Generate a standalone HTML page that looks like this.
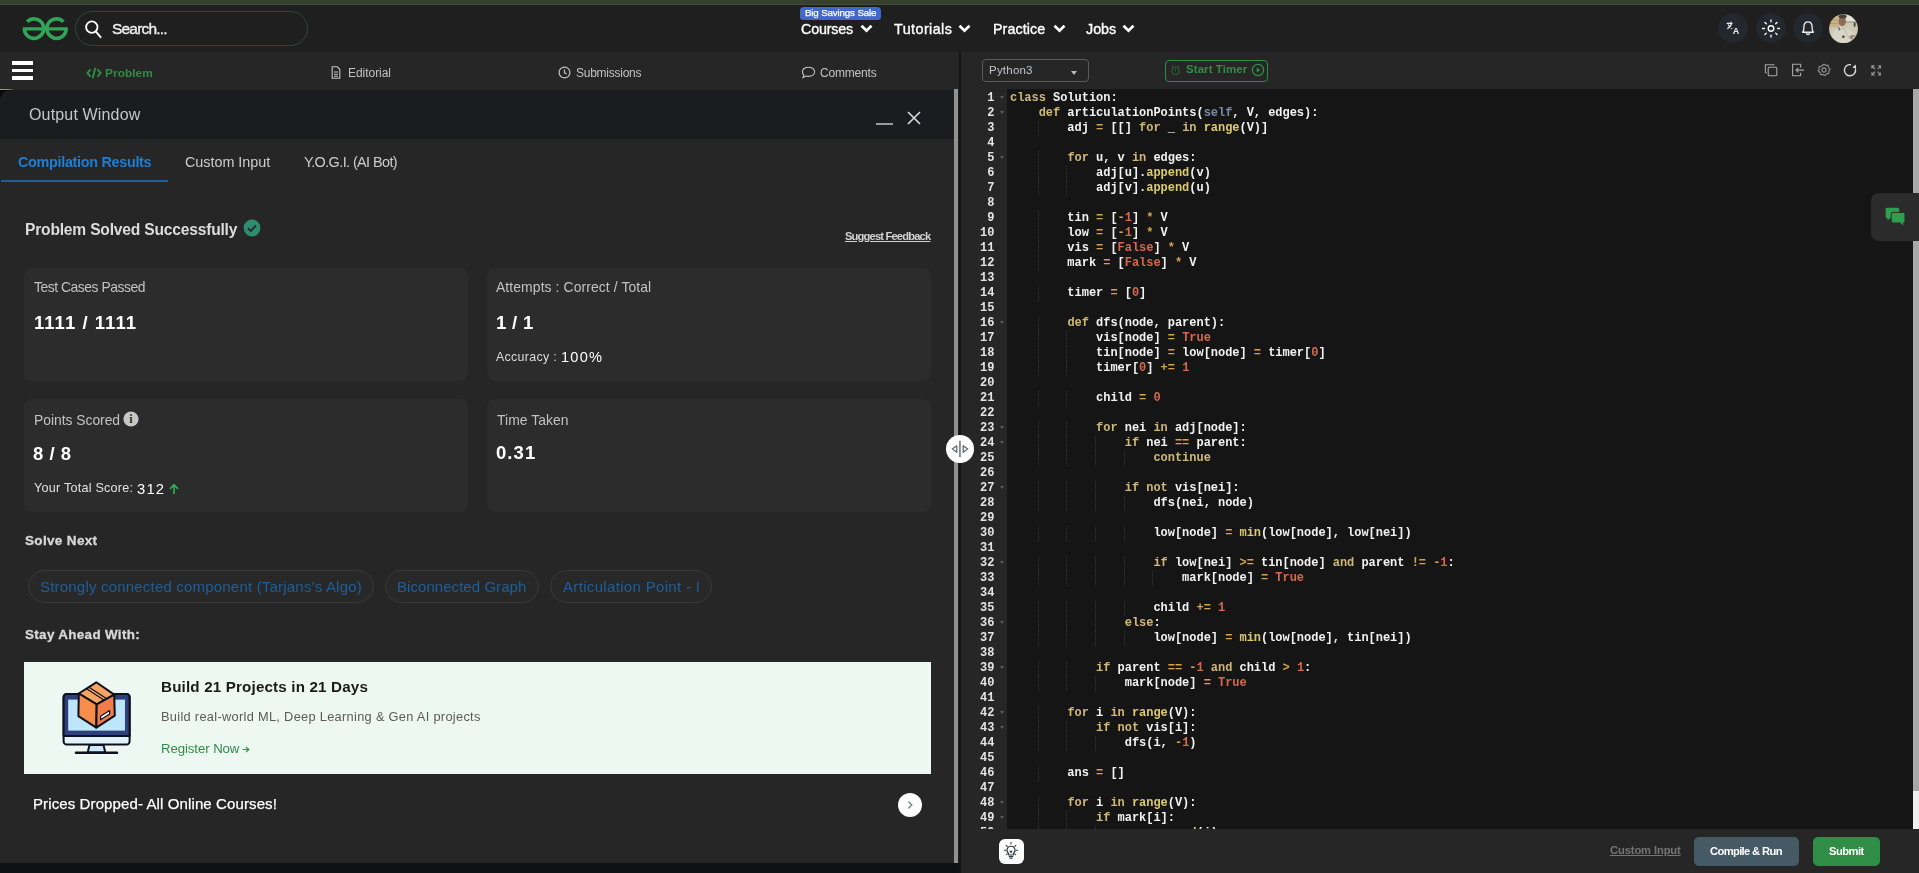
<!DOCTYPE html>
<html lang="en">
<head>
<meta charset="utf-8">
<title>Articulation Point - II | Practice | GeeksforGeeks</title>
<style>
*{box-sizing:border-box;margin:0;padding:0}
html,body{width:1919px;height:873px;overflow:hidden;background:#1f1f1f;font-family:"Liberation Sans",sans-serif;color:#fff}
i{font-style:normal}
.abs{position:absolute}
.t{position:absolute;white-space:nowrap;will-change:transform}
#topbar{left:0;top:0;width:1919px;height:5px;background:#35412d;border-bottom:1px solid #444c41}
#header{left:0;top:5px;width:1919px;height:47px;background:#1f1f1f}
#search{left:75px;top:11px;width:233px;height:35px;border:1px solid #2c4a34;border-radius:18px;background:#1f1f1f}
#badge{left:800px;top:7px;width:80.5px;height:13px;background:#4267c8;border-radius:4px 4px 3px 3px}
.circ{position:absolute;top:13px;width:30px;height:30px;border-radius:50%;background:#22282d}
#subL{left:0;top:52px;width:959px;height:38px;background:#262626}
#subR{left:961px;top:52px;width:958px;height:37px;background:#262626}
#divider{left:959px;top:52px;width:2px;height:821px;background:#141414}
#outhead{left:0;top:90px;width:954px;height:49px;background:#1a1c1f;border-top-left-radius:10px}
#outbody{left:0;top:139px;width:954px;height:724px;background:#262626}
#leftbottom{left:0;top:863px;width:959px;height:10px;background:#0f1113}
#lscroll{left:954px;top:89px;width:4px;height:774px;background:#909090}
.card{position:absolute;background:#2c2c2c;border-radius:8px}
.pill{position:absolute;top:570px;height:33px;border:1px solid #3a3a3a;border-radius:17px;background:#282828}
#editor{left:961px;top:89px;width:958px;height:740px;background:#151515;overflow:hidden}
#gutter{position:absolute;left:0;top:0;width:46px;will-change:transform;height:740px;background:#262626}
.gl{position:relative;height:15px;line-height:15px;font:bold 12px/15px "Liberation Mono",monospace;color:#e4e4e4;text-align:right;padding-right:12.5px}
.fd{position:absolute;right:3.5px;top:4.5px;width:0;height:0;border-left:2.5px solid transparent;border-right:2.5px solid transparent;border-top:3.5px solid #5c5c5c}
#code{position:absolute;left:49px;top:2px;will-change:transform;font:bold 12px/15px "Liberation Mono",monospace;color:#f2f2f2;letter-spacing:-0.03px}
.cl{height:15px;white-space:pre}
.k{color:#cfb878}.f{color:#dccb6e}.n{color:#d4694e}.s{color:#7c8aa6}.o{color:#d6a24e}
.g{display:inline-block;height:15px;vertical-align:top;background:linear-gradient(#363636 50%,transparent 50%) right top/1px 2px repeat-y}
#ebottom{left:961px;top:829px;width:958px;height:44px;background:#262626}
#rscroll{left:1913px;top:89px;width:6px;height:740px;background:#f0f0f0}
#rscroll div{width:6px;height:702px;background:#a8a8a8}
</style>
</head>
<body>
<div id="topbar" class="abs"></div>
<div id="header" class="abs"></div>
<!-- logo -->
<svg class="abs" style="left:22px;top:16px" width="48" height="26" viewBox="0 0 48 26">
<g fill="none" stroke="#30a457" stroke-width="3.6">
<path d="M5.2 5.8 A9.7 9.7 0 1 1 2.4 12.9"/>
<path d="M41.4 5.8 A9.7 9.7 0 1 0 44.2 12.9"/>
<path d="M0.8 12.9 H45.8" stroke-width="3.4"/>
</g>
</svg>
<div id="search" class="abs">
<svg class="abs" style="left:7px;top:6px" width="24" height="24" viewBox="0 0 24 24"><circle cx="8.8" cy="9.1" r="5.7" fill="none" stroke="#fff" stroke-width="1.8"/><path d="M12.7 13.3 L17.6 19.2" stroke="#fff" stroke-width="1.9" stroke-linecap="round"/></svg>
</div>
<div id="badge" class="abs"></div>
<svg class="abs" style="left:860px;top:24px" width="13" height="9" viewBox="0 0 13 9"><path d="M1.5 1.7 L6.5 6.7 L11.5 1.7" fill="none" stroke="#fff" stroke-width="2.7"/></svg>
<svg class="abs" style="left:958.3px;top:24px" width="13" height="9" viewBox="0 0 13 9"><path d="M1.5 1.7 L6.5 6.7 L11.5 1.7" fill="none" stroke="#fff" stroke-width="2.7"/></svg>
<svg class="abs" style="left:1052.5px;top:24px" width="13" height="9" viewBox="0 0 13 9"><path d="M1.5 1.7 L6.5 6.7 L11.5 1.7" fill="none" stroke="#fff" stroke-width="2.7"/></svg>
<svg class="abs" style="left:1122.3px;top:24px" width="13" height="9" viewBox="0 0 13 9"><path d="M1.5 1.7 L6.5 6.7 L11.5 1.7" fill="none" stroke="#fff" stroke-width="2.7"/></svg>
<!-- right icons -->
<div class="circ" style="left:1718px"><svg style="will-change:transform" width="30" height="30" viewBox="0 0 30 30"><g fill="none" stroke="#ededed" stroke-width="1.2"><path d="M8.7 10.3 H14.5 M12.9 8.7 V10.3 M9.2 15.8 C11.6 14.6 13 12.7 13.5 10.3 M10.1 11.5 C10.8 13.2 12.3 14.8 14.3 15.7"/></g><text x="14.7" y="20.9" font-family="Liberation Sans,sans-serif" font-weight="bold" font-size="9" fill="#ededed">A</text></svg></div>
<div class="circ" style="left:1756px"><svg width="30" height="30" viewBox="0 0 30 30"><g fill="none" stroke="#fff" stroke-width="1.45" stroke-linecap="round"><circle cx="15" cy="15.45" r="2.75"/><path d="M21.60 15.45 L23.50 15.45 M19.67 20.12 L21.01 21.46 M15.00 22.05 L15.00 23.95 M10.33 20.12 L8.99 21.46 M8.40 15.45 L6.50 15.45 M10.33 10.78 L8.99 9.44 M15.00 8.85 L15.00 6.95 M19.67 10.78 L21.01 9.44" stroke-width="1.35"/></g></svg></div>
<div class="circ" style="left:1793px"><svg width="30" height="30" viewBox="0 0 30 30"><g fill="none" stroke="#ededed" stroke-width="1.35" stroke-linejoin="round"><path d="M9.6 19.2 H20.4 C19.3 18.1 19.1 17.2 19.1 14.2 C19.1 10.9 17.4 8.9 15 8.9 C12.6 8.9 10.9 10.9 10.9 14.2 C10.9 17.2 10.7 18.1 9.6 19.2 Z"/><path d="M13.4 19.8 C13.6 21 14.2 21.6 15 21.6 C15.8 21.6 16.4 21 16.6 19.8"/></g></svg></div>
<!-- avatar -->
<svg class="abs" style="left:1828.5px;top:13.7px" width="29" height="30" viewBox="0 0 29 30"><defs><clipPath id="av"><circle cx="14.5" cy="14.7" r="14.4"/></clipPath><filter id="bl" x="-10%" y="-10%" width="120%" height="120%"><feGaussianBlur stdDeviation="0.55"/></filter></defs><g clip-path="url(#av)"><g filter="url(#bl)"><rect x="-2" y="-2" width="33" height="34" fill="#cdc9b7"/><path d="M-1 2 L10 1 L10 13 L-1 14 Z" fill="#c9b489"/><path d="M1 6 H9 M1 9.5 H9" stroke="#a89870" stroke-width="0.8"/><rect x="17" y="-1" width="13" height="9" fill="#e2e0d3"/><path d="M16 8 H28" stroke="#7c7a66" stroke-width="0.8"/><path d="M1 30 C2 18 7 14 12 13.5 C19 13 26 17 29 30 Z" fill="#d8d5c6"/><ellipse cx="13.2" cy="7.2" rx="3.7" ry="5" fill="#8d6d58"/><ellipse cx="13.6" cy="2.6" rx="4" ry="2" fill="#4d3f35"/><path d="M9 12.5 L11.5 15.5 L10 16.5 Z" fill="#4f4236"/><path d="M9 17 L15 14 L20 24" fill="none" stroke="#b9b5a2" stroke-width="0.9"/><ellipse cx="25.6" cy="10.5" rx="1" ry="2.6" fill="#3f4536"/><circle cx="14.4" cy="22.8" r="1.2" fill="#3b3a2c"/><ellipse cx="23.6" cy="23.2" rx="3" ry="2.2" fill="#9d8676"/><circle cx="25" cy="24" r="1" fill="#f0eee8"/></g></g></svg>

<div id="subL" class="abs"></div>
<div id="subR" class="abs"></div>
<div id="divider" class="abs"></div>
<!-- hamburger -->
<div class="abs" style="left:12px;top:61px;width:21px;height:3.5px;background:#fff"></div>
<div class="abs" style="left:12px;top:68.5px;width:21px;height:3.5px;background:#fff"></div>
<div class="abs" style="left:12px;top:76px;width:21px;height:3.5px;background:#fff"></div>
<div class="abs" style="left:0;top:88.5px;width:16px;height:1.6px;background:linear-gradient(90deg,#79b892,#5fa37c 50%,#1f4a32 80%,#163322);border-radius:0 2px 2px 0"></div>
<!-- tabs -->
<svg class="abs" style="left:86px;top:66.8px" width="16" height="12" viewBox="0 0 16 12"><g fill="none" stroke="#2f8d46" stroke-width="1.9"><path d="M4.6 2.4 L1.4 6 L4.6 9.6 M11.4 2.4 L14.6 6 L11.4 9.6 M9.3 0.8 L6.7 11.2"/></g></svg>
<svg class="abs" style="left:331px;top:66px" width="10" height="13" viewBox="0 0 10 13"><path d="M1.2 0.8 H6.3 L8.8 3.3 V12.2 H1.2 Z M3 6 H7 M3 8.2 H7 M3 10.2 H7" fill="none" stroke="#c4c4c4" stroke-width="1.1"/></svg>
<svg class="abs" style="left:558px;top:66px" width="13" height="13" viewBox="0 0 13 13"><circle cx="6.5" cy="6.5" r="5.4" fill="none" stroke="#c4c4c4" stroke-width="1.2"/><path d="M6.5 3.4 V6.8 L8.6 8" fill="none" stroke="#c4c4c4" stroke-width="1.2"/></svg>
<svg class="abs" style="left:801px;top:66px" width="15" height="13" viewBox="0 0 15 13"><path d="M7.5 1.2 C11 1.2 13.6 3.2 13.6 5.8 C13.6 8.4 11 10.4 7.5 10.4 C6.6 10.4 5.8 10.3 5 10 L2 11.6 L2.8 8.9 C1.9 8.1 1.4 7 1.4 5.8 C1.4 3.2 4 1.2 7.5 1.2 Z" fill="none" stroke="#c4c4c4" stroke-width="1.1"/></svg>
<!-- editor toolbar -->
<div class="abs" style="left:982px;top:59px;width:107px;height:23px;border:1px solid #5a5a5a;border-radius:4px;background:#262626"></div>
<div class="abs" style="left:1071px;top:71px;width:0;height:0;border-left:3.5px solid transparent;border-right:3.5px solid transparent;border-top:4px solid #bbb"></div>
<div class="abs" style="left:1165px;top:60px;width:103px;height:22px;border:1px solid #2f8d46;border-radius:4px"></div>
<svg class="abs" style="left:1169.5px;top:64px" width="11" height="12" viewBox="0 0 11 12"><g fill="none" stroke="#256e38" stroke-width="1"><circle cx="5.5" cy="6.8" r="3.8"/><path d="M5.5 4.8 V7 M1.8 2.6 L3.4 1.4 M9.2 2.6 L7.6 1.4"/></g></svg>
<svg class="abs" style="left:1251px;top:63px" width="14" height="14" viewBox="0 0 14 14"><circle cx="7" cy="7" r="5.6" fill="none" stroke="#2f8d46" stroke-width="1.2"/><path d="M5.6 4.4 L9.4 7 L5.6 9.6 Z" fill="#2f8d46"/></svg>
<!-- toolbar icons -->
<svg class="abs" style="left:1764px;top:63px" width="14" height="14" viewBox="0 0 14 14"><g fill="none" stroke="#a6a6a6" stroke-width="1.1"><rect x="4.2" y="4.2" width="8.6" height="8.6" rx="1"/><path d="M9.8 2.6 V1.8 H1.4 V9.8 H2.6"/></g></svg>
<svg class="abs" style="left:1791px;top:63px" width="14" height="14" viewBox="0 0 14 14"><g fill="none" stroke="#a6a6a6" stroke-width="1.1"><path d="M9.6 4.4 V1.2 H1.6 V12.8 H9.6 V9.8"/><path d="M13 7.1 H5 M7.4 4.8 L5 7.1 L7.4 9.4"/></g></svg>
<svg class="abs" style="left:1817px;top:63px" width="14" height="14" viewBox="0 0 14 14"><g fill="none" stroke="#929292" stroke-width="1.1"><path d="M7 1.2 L8.9 2.4 L11.1 2.3 L11.6 4.5 L13 6.2 L11.9 8.1 L11.8 10.4 L9.6 10.9 L7.9 12.6 L6 11.6 L3.7 11.6 L3 9.5 L1.2 8 L2.2 6 L2 3.8 L4.2 3.2 Z" stroke-linejoin="round"/><circle cx="7" cy="7" r="2.1"/></g></svg>
<svg class="abs" style="left:1842px;top:62px" width="16" height="16" viewBox="0 0 16 16"><path d="M9 2.7 A5.6 5.6 0 1 0 13.5 7.2" fill="none" stroke="#dcdcdc" stroke-width="1.4"/><path d="M13.9 2.6 L14.1 6.9 L10.4 5.3 Z" fill="#dcdcdc"/></svg>
<svg class="abs" style="left:1870.6px;top:65px" width="10.8" height="10.8" viewBox="0 0 12 12"><g fill="none" stroke="#959595" stroke-width="1.3"><path d="M1 4 V1 H4 M8 1 H11 V4 M11 8 V11 H8 M4 11 H1 V8 M1.2 1.2 L4.6 4.6 M10.8 1.2 L7.4 4.6 M10.8 10.8 L7.4 7.4 M1.2 10.8 L4.6 7.4"/></g></svg>
<!-- output window -->
<div class="abs" style="left:0;top:90px;width:12px;height:14px;background:#060906"></div>
<div id="outhead" class="abs"></div>
<div id="outbody" class="abs"></div>
<div id="leftbottom" class="abs"></div>
<div id="lscroll" class="abs"></div>
<div class="abs" style="left:876px;top:123px;width:17px;height:2px;background:#9a9a9a"></div>
<svg class="abs" style="left:906px;top:110px" width="16" height="16" viewBox="0 0 16 16"><path d="M2 2 L14 14 M14 2 L2 14" stroke="#d6d6d6" stroke-width="1.7"/></svg>
<div class="abs" style="left:1px;top:180px;width:167px;height:2px;background:#1b5f9e"></div>
<svg class="abs" style="left:243px;top:219px" width="18" height="18" viewBox="0 0 18 18"><circle cx="9" cy="9" r="8.4" fill="#2f8d6f"/><path d="M5 9.3 L7.9 12 L13 6.4" fill="none" stroke="#262626" stroke-width="1.9"/></svg>
<div class="card" style="left:24px;top:268px;width:444px;height:113px"></div>
<div class="card" style="left:487px;top:268px;width:444px;height:113px"></div>
<div class="card" style="left:24px;top:399px;width:444px;height:113px"></div>
<div class="card" style="left:487px;top:399px;width:444px;height:113px"></div>
<svg class="abs" style="left:123.4px;top:411.4px" width="16" height="16" viewBox="0 0 16 16"><circle cx="8" cy="8" r="7.6" fill="#c6c6c6"/><text x="8" y="12.2" text-anchor="middle" font-family="Liberation Serif,serif" font-weight="bold" font-size="12" fill="#2c2c2c">i</text></svg>
<svg class="abs" style="left:168px;top:483px" width="12" height="12" viewBox="0 0 12 12"><path d="M6 11 V2 M2 5.8 L6 1.8 L10 5.8" fill="none" stroke="#2fae4f" stroke-width="1.7"/></svg>
<div class="pill" style="left:28px;width:346px"></div>
<div class="pill" style="left:385px;width:154px"></div>
<div class="pill" style="left:550px;width:162px"></div>
<div class="abs" style="left:24px;top:662px;width:907px;height:112px;background:#eef8f3"></div>
<div class="abs" style="left:898px;top:792.5px;width:24px;height:24px;border-radius:50%;background:#fff"></div>
<svg class="abs" style="left:905px;top:798.6px" width="10" height="12" viewBox="0 0 10 12"><path d="M3.4 2.6 L6.8 6 L3.4 9.4" fill="none" stroke="#6b8f8a" stroke-width="1.4"/></svg>

<svg class="abs" style="left:241.5px;top:746px" width="8" height="7" viewBox="0 0 8 7"><path d="M0.6 3.5 H6.6 M4 0.9 L6.8 3.5 L4 6.1" fill="none" stroke="#2f8d46" stroke-width="1.2"/></svg>
<!-- banner icon -->
<svg class="abs" style="left:50px;top:670px" width="100" height="95" viewBox="0 0 100 95">
<g stroke="#0d101d" stroke-width="2" stroke-linejoin="round">
<path d="M39.5 75 H53.5 L55.3 82.4 H37.7 Z" fill="#cbe9f8"/>
<rect x="13.6" y="24" width="66" height="50.6" rx="3.2" fill="#e1f2fb"/>
<path d="M13.6 66 V27.2 A3.2 3.2 0 0 1 16.8 24 H76.4 A3.2 3.2 0 0 1 79.6 27.2 V66 Z" fill="#2e3f7c"/>
<rect x="18.2" y="29.6" width="56.8" height="31" fill="#bde6fb" stroke="none"/>
<path d="M26 82.8 H67" stroke-width="2.5" stroke-linecap="round"/>
<path d="M46.3 12.3 L64.2 24.6 L46.7 34.4 L28.8 23.5 Z" fill="#f7a461"/>
<path d="M28.8 23.5 L46.7 34.4 L46.3 57.6 L28.4 46.2 Z" fill="#f68e49"/>
<path d="M46.7 34.4 L64.2 24.6 L64.8 45.6 L46.3 57.6 Z" fill="#ef7c4a"/>
<path d="M39 17.2 L56.8 28.8 M36.6 18.8 L54.3 30.3" fill="none" stroke-width="1.2"/>
<path d="M50.6 46.2 L59.6 40.6 V44 L50.6 49.8 Z" fill="#fff" stroke-width="1.2"/>
</g>
</svg>
<!-- editor -->
<div id="editor" class="abs">
<div id="gutter">
<div style="height:2px"></div>
<div class="gl">1<b class="fd"></b></div>
<div class="gl">2<b class="fd"></b></div>
<div class="gl">3</div>
<div class="gl">4</div>
<div class="gl">5<b class="fd"></b></div>
<div class="gl">6</div>
<div class="gl">7</div>
<div class="gl">8</div>
<div class="gl">9</div>
<div class="gl">10</div>
<div class="gl">11</div>
<div class="gl">12</div>
<div class="gl">13</div>
<div class="gl">14</div>
<div class="gl">15</div>
<div class="gl">16<b class="fd"></b></div>
<div class="gl">17</div>
<div class="gl">18</div>
<div class="gl">19</div>
<div class="gl">20</div>
<div class="gl">21</div>
<div class="gl">22</div>
<div class="gl">23<b class="fd"></b></div>
<div class="gl">24<b class="fd"></b></div>
<div class="gl">25</div>
<div class="gl">26</div>
<div class="gl">27<b class="fd"></b></div>
<div class="gl">28</div>
<div class="gl">29</div>
<div class="gl">30</div>
<div class="gl">31</div>
<div class="gl">32<b class="fd"></b></div>
<div class="gl">33</div>
<div class="gl">34</div>
<div class="gl">35</div>
<div class="gl">36<b class="fd"></b></div>
<div class="gl">37</div>
<div class="gl">38</div>
<div class="gl">39<b class="fd"></b></div>
<div class="gl">40</div>
<div class="gl">41</div>
<div class="gl">42<b class="fd"></b></div>
<div class="gl">43<b class="fd"></b></div>
<div class="gl">44</div>
<div class="gl">45</div>
<div class="gl">46</div>
<div class="gl">47</div>
<div class="gl">48<b class="fd"></b></div>
<div class="gl">49<b class="fd"></b></div>
<div class="gl">50</div>
</div>
<div id="code">
<div class="cl"><i class="k">class</i> Solution:</div>
<div class="cl">    <i class="k">def</i> articulationPoints(<i class="s">self</i>, V, edges):</div>
<div class="cl"><i class="g">    </i>    adj <i class="o">=</i> [[] <i class="k">for</i> _ <i class="k">in</i> <i class="f">range</i>(V)]</div>
<div class="cl"></div>
<div class="cl"><i class="g">    </i>    <i class="k">for</i> u, v <i class="k">in</i> edges:</div>
<div class="cl"><i class="g">    </i><i class="g">    </i>    adj[u].<i class="f">append</i>(v)</div>
<div class="cl"><i class="g">    </i><i class="g">    </i>    adj[v].<i class="f">append</i>(u)</div>
<div class="cl"></div>
<div class="cl"><i class="g">    </i>    tin <i class="o">=</i> [<i class="o">-</i><i class="n">1</i>] <i class="o">*</i> V</div>
<div class="cl"><i class="g">    </i>    low <i class="o">=</i> [<i class="o">-</i><i class="n">1</i>] <i class="o">*</i> V</div>
<div class="cl"><i class="g">    </i>    vis <i class="o">=</i> [<i class="n">False</i>] <i class="o">*</i> V</div>
<div class="cl"><i class="g">    </i>    mark <i class="o">=</i> [<i class="n">False</i>] <i class="o">*</i> V</div>
<div class="cl"></div>
<div class="cl"><i class="g">    </i>    timer <i class="o">=</i> [<i class="n">0</i>]</div>
<div class="cl"></div>
<div class="cl"><i class="g">    </i>    <i class="k">def</i> dfs(node, parent):</div>
<div class="cl"><i class="g">    </i><i class="g">    </i>    vis[node] <i class="o">=</i> <i class="n">True</i></div>
<div class="cl"><i class="g">    </i><i class="g">    </i>    tin[node] <i class="o">=</i> low[node] <i class="o">=</i> timer[<i class="n">0</i>]</div>
<div class="cl"><i class="g">    </i><i class="g">    </i>    timer[<i class="n">0</i>] <i class="o">+=</i> <i class="n">1</i></div>
<div class="cl"></div>
<div class="cl"><i class="g">    </i><i class="g">    </i>    child <i class="o">=</i> <i class="n">0</i></div>
<div class="cl"></div>
<div class="cl"><i class="g">    </i><i class="g">    </i>    <i class="k">for</i> nei <i class="k">in</i> adj[node]:</div>
<div class="cl"><i class="g">    </i><i class="g">    </i><i class="g">    </i>    <i class="k">if</i> nei <i class="o">==</i> parent:</div>
<div class="cl"><i class="g">    </i><i class="g">    </i><i class="g">    </i><i class="g">    </i>    <i class="k">continue</i></div>
<div class="cl"></div>
<div class="cl"><i class="g">    </i><i class="g">    </i><i class="g">    </i>    <i class="k">if</i> <i class="k">not</i> vis[nei]:</div>
<div class="cl"><i class="g">    </i><i class="g">    </i><i class="g">    </i><i class="g">    </i>    dfs(nei, node)</div>
<div class="cl"></div>
<div class="cl"><i class="g">    </i><i class="g">    </i><i class="g">    </i><i class="g">    </i>    low[node] <i class="o">=</i> <i class="f">min</i>(low[node], low[nei])</div>
<div class="cl"></div>
<div class="cl"><i class="g">    </i><i class="g">    </i><i class="g">    </i><i class="g">    </i>    <i class="k">if</i> low[nei] <i class="o">&gt;=</i> tin[node] <i class="k">and</i> parent <i class="o">!=</i> <i class="o">-</i><i class="n">1</i>:</div>
<div class="cl"><i class="g">    </i><i class="g">    </i><i class="g">    </i><i class="g">    </i><i class="g">    </i>    mark[node] <i class="o">=</i> <i class="n">True</i></div>
<div class="cl"></div>
<div class="cl"><i class="g">    </i><i class="g">    </i><i class="g">    </i><i class="g">    </i>    child <i class="o">+=</i> <i class="n">1</i></div>
<div class="cl"><i class="g">    </i><i class="g">    </i><i class="g">    </i>    <i class="k">else</i>:</div>
<div class="cl"><i class="g">    </i><i class="g">    </i><i class="g">    </i><i class="g">    </i>    low[node] <i class="o">=</i> <i class="f">min</i>(low[node], tin[nei])</div>
<div class="cl"></div>
<div class="cl"><i class="g">    </i><i class="g">    </i>    <i class="k">if</i> parent <i class="o">==</i> <i class="o">-</i><i class="n">1</i> <i class="k">and</i> child <i class="o">&gt;</i> <i class="n">1</i>:</div>
<div class="cl"><i class="g">    </i><i class="g">    </i><i class="g">    </i>    mark[node] <i class="o">=</i> <i class="n">True</i></div>
<div class="cl"></div>
<div class="cl"><i class="g">    </i>    <i class="k">for</i> i <i class="k">in</i> <i class="f">range</i>(V):</div>
<div class="cl"><i class="g">    </i><i class="g">    </i>    <i class="k">if</i> <i class="k">not</i> vis[i]:</div>
<div class="cl"><i class="g">    </i><i class="g">    </i><i class="g">    </i>    dfs(i, <i class="o">-</i><i class="n">1</i>)</div>
<div class="cl"></div>
<div class="cl"><i class="g">    </i>    ans <i class="o">=</i> []</div>
<div class="cl"></div>
<div class="cl"><i class="g">    </i>    <i class="k">for</i> i <i class="k">in</i> <i class="f">range</i>(V):</div>
<div class="cl"><i class="g">    </i><i class="g">    </i>    <i class="k">if</i> mark[i]:</div>
<div class="cl"><i class="g">    </i><i class="g">    </i><i class="g">    </i>    ans.<i class="f">append</i>(i)</div>
</div>
</div>
<div id="rscroll" class="abs"><div></div></div>
<div id="ebottom" class="abs"></div>
<div class="abs" style="left:998.6px;top:839.4px;width:25px;height:24.4px;border-radius:6px;background:#fff"></div>
<svg class="abs" style="left:1001px;top:841px" width="20" height="20" viewBox="0 0 20 20"><g fill="none" stroke="#2b3a42" stroke-width="1.1" stroke-linecap="round"><path d="M10 5.2 A4 4 0 0 1 12.3 12.5 V14 H7.7 V12.5 A4 4 0 0 1 10 5.2 Z"/><path d="M8.2 15.6 H11.8 M9 17.2 H11 M10 1.6 V3 M3.4 9.2 H4.8 M15.2 9.2 H16.6 M5.2 4.4 L6.2 5.4 M14.8 4.4 L13.8 5.4 M5.4 13.6 L6.3 12.8 M14.6 13.6 L13.7 12.8"/><path d="M9 10 L10 11.5 L11 10"/></g></svg>
<div class="abs" style="left:1694px;top:837px;width:105px;height:29px;border-radius:5px;background:#455a64"></div>
<div class="abs" style="left:1813px;top:837px;width:67px;height:29px;border-radius:5px;background:#2f8d46"></div>
<!-- chat float -->
<div class="abs" style="left:1871px;top:193px;width:48px;height:48px;background:#2b2b2b;border-radius:8px 0 0 8px"></div>
<svg class="abs" style="left:1885px;top:207px" width="22" height="20" viewBox="0 0 22 20"><g fill="#2f9e4f"><rect x="0.6" y="0.8" width="13.6" height="10.4" rx="1.8"/><path d="M2.4 10.6 V13.6 L5.6 10.8 Z"/><rect x="6.2" y="5.4" width="13.8" height="10.6" rx="1.8" stroke="#2b2b2b" stroke-width="1"/><path d="M15 15.6 L18.2 18.4 V15.4 Z"/></g></svg>
<!-- splitter handle -->
<div class="abs" style="left:946px;top:435px;width:28px;height:28px;border-radius:50%;background:#fff"></div>
<svg class="abs" style="left:950px;top:440px" width="20" height="18" viewBox="0 0 20 18"><g fill="none" stroke="#5d6b76" stroke-width="1.3" stroke-linejoin="round"><path d="M9.95 0.8 V17.2" stroke="#2f3b45" stroke-width="1.1"/><path d="M6.8 5.8 V12.2 L2.3 9 Z"/><path d="M13.2 5.8 V12.2 L17.7 9 Z"/></g></svg>

<div class="t" style="left:111.7px;top:20.8px;font-size:15.5px;line-height:15.5px;color:#f0f0f0;letter-spacing:-0.804px;-webkit-text-stroke:0.35px #f0f0f0;">Search...</div>
<div class="t" style="left:805.1px;top:7.9px;font-size:9.8px;line-height:9.8px;color:#fff;letter-spacing:-0.172px;-webkit-text-stroke:0.25px #fff;">Big Savings Sale</div>
<div class="t" style="left:801.1px;top:21.5px;font-size:14.3px;line-height:14.3px;color:#fff;letter-spacing:-0.175px;-webkit-text-stroke:0.35px #fff;">Courses</div>
<div class="t" style="left:894.4px;top:21.5px;font-size:14.3px;line-height:14.3px;color:#fff;letter-spacing:0.450px;-webkit-text-stroke:0.35px #fff;">Tutorials</div>
<div class="t" style="left:993.4px;top:21.5px;font-size:14.3px;line-height:14.3px;color:#fff;letter-spacing:0.078px;-webkit-text-stroke:0.35px #fff;">Practice</div>
<div class="t" style="left:1086.1px;top:21.5px;font-size:14.3px;line-height:14.3px;color:#fff;letter-spacing:-0.001px;-webkit-text-stroke:0.35px #fff;">Jobs</div>
<div class="t" style="left:105.4px;top:67.6px;font-size:11.8px;line-height:11.8px;color:#2f8d46;letter-spacing:0.083px;font-weight:bold;">Problem</div>
<div class="t" style="left:347.8px;top:66.5px;font-size:12px;line-height:12px;color:#c2c2c2;letter-spacing:-0.045px;">Editorial</div>
<div class="t" style="left:576.4px;top:66.5px;font-size:12px;line-height:12px;color:#c2c2c2;letter-spacing:-0.253px;">Submissions</div>
<div class="t" style="left:820.3px;top:66.5px;font-size:12px;line-height:12px;color:#c2c2c2;letter-spacing:-0.188px;">Comments</div>
<div class="t" style="left:989.4px;top:65.1px;font-size:11.5px;line-height:11.5px;color:#c0c5ca;letter-spacing:0.216px;">Python3</div>
<div class="t" style="left:1186.1px;top:64.1px;font-size:11.5px;line-height:11.5px;color:#2f8d46;letter-spacing:0.068px;font-weight:bold;">Start Timer</div>
<div class="t" style="left:28.9px;top:107.3px;font-size:16px;line-height:16px;color:#c6c6c6;letter-spacing:0.159px;">Output Window</div>
<div class="t" style="left:18.0px;top:154.5px;font-size:14.4px;line-height:14.4px;color:#1e7ed6;letter-spacing:-0.307px;font-weight:bold;">Compilation Results</div>
<div class="t" style="left:185.0px;top:154.5px;font-size:14.4px;line-height:14.4px;color:#cdcdcd;letter-spacing:-0.036px;">Custom Input</div>
<div class="t" style="left:303.6px;top:154.5px;font-size:14.4px;line-height:14.4px;color:#cdcdcd;letter-spacing:-0.582px;">Y.O.G.I. (AI Bot)</div>
<div class="t" style="left:24.6px;top:221.9px;font-size:15.6px;line-height:15.6px;color:#dcdcdc;letter-spacing:-0.197px;font-weight:bold;">Problem Solved Successfully</div>
<div class="t" style="left:845.2px;top:231.1px;font-size:11.2px;line-height:11.2px;color:#d2d2d2;letter-spacing:-0.844px;font-weight:bold;text-decoration:underline;text-underline-offset:1px;">Suggest Feedback</div>
<div class="t" style="left:34.3px;top:281.4px;font-size:13.9px;line-height:13.9px;color:#c2c2c2;letter-spacing:-0.469px;">Test Cases Passed</div>
<div class="t" style="left:34.3px;top:313.5px;font-size:18.5px;line-height:18.5px;color:#fff;letter-spacing:1.039px;font-weight:bold;">1111 / 1111</div>
<div class="t" style="left:496.1px;top:281.4px;font-size:13.9px;line-height:13.9px;color:#c2c2c2;letter-spacing:0.104px;">Attempts : Correct / Total</div>
<div class="t" style="left:496.1px;top:313.5px;font-size:18.5px;line-height:18.5px;color:#fff;letter-spacing:0.300px;font-weight:bold;">1 / 1</div>
<div class="t" style="left:496.1px;top:350.8px;font-size:12.4px;line-height:12.4px;color:#dadada;letter-spacing:0.306px;">Accuracy :</div>
<div class="t" style="left:561.0px;top:349.6px;font-size:14.6px;line-height:14.6px;color:#fff;letter-spacing:1.257px;">100%</div>
<div class="t" style="left:33.8px;top:414.3px;font-size:13.9px;line-height:13.9px;color:#c2c2c2;letter-spacing:-0.032px;">Points Scored</div>
<div class="t" style="left:33.4px;top:445.1px;font-size:18.5px;line-height:18.5px;color:#fff;letter-spacing:0.500px;font-weight:bold;">8 / 8</div>
<div class="t" style="left:33.8px;top:482.4px;font-size:12.6px;line-height:12.6px;color:#e2e2e2;letter-spacing:0.236px;">Your Total Score:</div>
<div class="t" style="left:136.6px;top:481.6px;font-size:14.8px;line-height:14.8px;color:#fff;letter-spacing:1.148px;">312</div>
<div class="t" style="left:496.6px;top:414.1px;font-size:13.9px;line-height:13.9px;color:#c2c2c2;letter-spacing:0.041px;">Time Taken</div>
<div class="t" style="left:496.1px;top:444.3px;font-size:18.5px;line-height:18.5px;color:#fff;letter-spacing:1.061px;font-weight:bold;">0.31</div>
<div class="t" style="left:24.5px;top:534.0px;font-size:13.5px;line-height:13.5px;color:#d8d8d8;letter-spacing:0.341px;font-weight:bold;-webkit-text-stroke:0.3px #d8d8d8;">Solve Next</div>
<div class="t" style="left:40.0px;top:578.9px;font-size:15px;line-height:15px;color:#1c5f9d;letter-spacing:0.197px;">Strongly connected component (Tarjans&#x27;s Algo)</div>
<div class="t" style="left:397.3px;top:578.9px;font-size:15px;line-height:15px;color:#1c5f9d;letter-spacing:0.055px;">Biconnected Graph</div>
<div class="t" style="left:562.6px;top:578.9px;font-size:15px;line-height:15px;color:#1c5f9d;letter-spacing:0.330px;">Articulation Point - I</div>
<div class="t" style="left:24.5px;top:627.9px;font-size:13.4px;line-height:13.4px;color:#d8d8d8;letter-spacing:0.347px;font-weight:bold;-webkit-text-stroke:0.3px #d8d8d8;">Stay Ahead With:</div>
<div class="t" style="left:160.7px;top:678.5px;font-size:15.2px;line-height:15.2px;color:#1a1a1a;letter-spacing:0.159px;font-weight:bold;">Build 21 Projects in 21 Days</div>
<div class="t" style="left:160.7px;top:710.8px;font-size:12.8px;line-height:12.8px;color:#5a5a5a;letter-spacing:0.307px;">Build real-world ML, Deep Learning &amp; Gen AI projects</div>
<div class="t" style="left:160.7px;top:742.3px;font-size:13.2px;line-height:13.2px;color:#2f8d46;letter-spacing:-0.069px;">Register Now</div>
<div class="t" style="left:32.6px;top:795.9px;font-size:15px;line-height:15px;color:#fff;letter-spacing:0.111px;-webkit-text-stroke:0.25px #fff;">Prices Dropped- All Online Courses!</div>
<div class="t" style="left:1609.6px;top:845.1px;font-size:11.2px;line-height:11.2px;color:#757575;letter-spacing:-0.118px;font-weight:bold;text-decoration:underline;text-underline-offset:1px;">Custom Input</div>
<div class="t" style="left:1710.0px;top:846.1px;font-size:11.2px;line-height:11.2px;color:#fff;letter-spacing:-0.641px;font-weight:bold;">Compile &amp; Run</div>
<div class="t" style="left:1829.0px;top:846.1px;font-size:11.2px;line-height:11.2px;color:#fff;letter-spacing:-0.544px;font-weight:bold;">Submit</div>
</body>
</html>
